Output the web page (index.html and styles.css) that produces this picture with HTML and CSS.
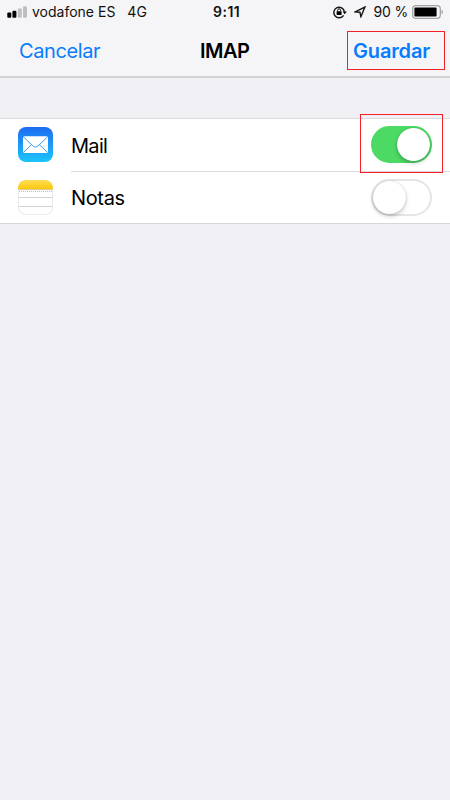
FILE: index.html
```html
<!DOCTYPE html>
<html lang="es">
<head>
<meta charset="utf-8">
<meta name="viewport" content="width=device-width, initial-scale=1">
<title>IMAP</title>
<link rel="stylesheet" href="styles.css">
</head>
<body>
<div class="screen">
  <header class="top">
    <div class="status">
      <div class="status-left">
        <svg class="signal" width="21" height="12" viewBox="0 0 21 12">
          <rect x="0.3" y="6.5" width="4" height="5.2" rx="1"/>
          <rect x="5.4" y="4.8" width="4" height="6.9" rx="1"/>
          <rect class="weak" x="10.8" y="2.4" width="4" height="9.3" rx="1"/>
          <rect class="weak" x="16" y="0.3" width="4" height="11.4" rx="1"/>
        </svg>
        <span class="carrier">vodafone ES</span>
        <span class="network">4G</span>
      </div>
      <span class="clock">9:11</span>
      <div class="status-right">
        <svg class="lock" width="14" height="13" viewBox="0 0 14 13">
          <path class="line" d="M10.6 9.4A5.3 5.3 0 1 1 11.4 5.7"/>
          <path d="M9.6 5.4h4.2l-2.1 2.8z"/>
          <rect x="3.6" y="5.3" width="5" height="3.7" rx=".4"/>
          <path class="shackle" d="M4.6 5.6V4.3a1.5 1.5 0 0 1 3 0v1.3"/>
        </svg>
        <svg class="arrow" width="12" height="12" viewBox="0 0 12 12">
          <path class="line" d="M10.9 1L6.9 10.7L5.9 6.2L1.1 5.9Z"/>
        </svg>
        <span class="percent">90 %</span>
        <svg class="battery" width="32" height="14" viewBox="0 0 32 14">
          <rect class="shell" x=".7" y=".7" width="27.6" height="12.6" rx="3"/>
          <rect x="2.4" y="2.4" width="22.2" height="9.2" rx="1"/>
          <path class="cap" d="M29.5 4.7q1.5.5 1.5 2.3t-1.5 2.3z"/>
        </svg>
      </div>
    </div>
    <nav class="nav">
      <a class="cancel">Cancelar</a>
      <h1 class="title">IMAP</h1>
      <div class="save-box"><a class="save">Guardar</a></div>
    </nav>
  </header>
  <main class="list">
    <div class="row first">
      <svg class="app" width="35" height="35" viewBox="0 0 35 35">
        <defs><linearGradient id="sky" x2="0" y2="1"><stop stop-color="#1d6cf0"/><stop offset="1" stop-color="#1cc4fb"/></linearGradient></defs>
        <rect width="35" height="35" rx="8" fill="url(#sky)"/>
        <rect x="5" y="9.3" width="25" height="16.7" rx="1.5" fill="#fff"/>
        <path d="M5.6 10l9.6 9.2q2.3 2 4.6 0L29.4 10M5.6 25.3l8-7.6M29.4 25.3l-8-7.6" fill="none" stroke="#3d9cf3" stroke-width="1"/>
      </svg>
      <div class="cell"><span class="label mail">Mail</span><span class="switch on"><i class="knob"></i></span></div>
      <div class="marker"></div>
    </div>
    <div class="row">
      <svg class="app" width="35" height="35" viewBox="0 0 35 35">
        <defs>
          <linearGradient id="sun" x2="0" y2="1"><stop stop-color="#ffdc55"/><stop offset="1" stop-color="#fcc80c"/></linearGradient>
          <clipPath id="tile"><rect width="35" height="35" rx="8"/></clipPath>
        </defs>
        <g clip-path="url(#tile)">
          <rect width="35" height="35" fill="#fff"/>
          <rect width="35" height="9.3" fill="url(#sun)"/>
          <path d="M0 9.6h35" stroke="#cdbf90" stroke-width=".8"/>
          <path d="M1 11.4h34" stroke="#b4b4b4" stroke-width="1" stroke-dasharray="1 1"/>
          <path d="M0 17.5h35M0 26.5h35" stroke="#d2d2d2"/>
        </g>
        <path d="M.4 9.5V27a7.6 7.6 0 0 0 7.6 7.6h19a7.6 7.6 0 0 0 7.6-7.6V9.5" fill="none" stroke="#e2e2e2" stroke-width=".8"/>
      </svg>
      <div class="cell"><span class="label notas">Notas</span><span class="switch"><i class="knob"></i></span></div>
    </div>
  </main>
</div>
</body>
</html>
```

FILE: styles.css
```css
* { box-sizing: border-box; }
body { margin: 0; font-family: Inter, "Liberation Sans", sans-serif; color: #000; }
.screen { width: 450px; height: 800px; overflow: hidden; background: #efeff4; }
.top { height: 78px; background: #f5f5f7; border-bottom: 2px solid #d3d3d7; }
.status { display: grid; grid-template-columns: 213px 1fr auto; height: 24px; align-items: center; padding-right: 6px; font-size: 14px; line-height: 24px; white-space: nowrap; color: #111; }
.status-left, .status-right { display: flex; align-items: center; }
.status-left { padding-left: 7px; }
.signal { margin-right: 4px; }
.weak { fill: #bfbfc2; }
.network { margin-left: 12px; }
.clock { font-weight: 600; letter-spacing: .5px; }
.lock { margin-right: 7px; }
.arrow { margin-right: 7px; }
.percent { margin-right: 4px; letter-spacing: -.15px; }
.line { fill: none; stroke: #151515; stroke-width: 1.4; }
.shackle { fill: none; stroke: #151515; stroke-width: 1; }
.shell { fill: none; stroke: #a5a5a8; stroke-width: 1.3; }
.cap { fill: #a5a5a8; }
.nav { display: grid; grid-template-columns: 200px 147px 98px; height: 53px; align-items: center; line-height: 41px; }
.cancel { padding-left: 19px; font-size: 20px; letter-spacing: -.4px; color: #087cff; padding-top: 1px; }
.title { margin: 0; padding-top: 1px; font-size: 20px; font-weight: 600; letter-spacing: -.5px; }
.save-box { height: 39px; border: 1px solid #f32027; padding-left: 5px; line-height: 39px; }
.save { font-size: 20px; font-weight: 600; letter-spacing: -.15px; color: #087cff; }
.list { margin-top: 40px; background: #fff; border-top: 1px solid #dadade; border-bottom: 1px solid #d6d6da; }
.row { position: relative; display: flex; height: 51px; padding-left: 18px; align-items: center; }
.row.first { height: 53px; }
.app { flex: none; margin-right: 18px; }
.first .app { margin-bottom: 2px; }
.cell { flex: 1; display: flex; height: 100%; align-items: center; justify-content: space-between; padding-right: 18px; }
.first .cell { border-bottom: 1px solid #dcdcdf; }
.label { font-size: 20px; line-height: 30px; padding-top: 1px; }
.mail { letter-spacing: -.7px; }
.notas { letter-spacing: -.35px; }
.switch { width: 61px; height: 37px; border: 2px solid #e5e5e5; border-radius: 19px; background: #fff; }
.switch.on { border-color: #4cd964; background: #4cd964; }
.first .switch { margin-bottom: 1px; }
.knob { display: block; width: 33px; height: 33px; border-radius: 50%; background: #fff; box-shadow: 0 2px 4px rgba(0,0,0,.24), 0 0 1px rgba(0,0,0,.2); }
.on .knob { margin-left: 24px; }
.marker { position: absolute; left: 360px; top: -5px; width: 83px; height: 59px; border: 1px solid #f32027; z-index: 1; }
```
